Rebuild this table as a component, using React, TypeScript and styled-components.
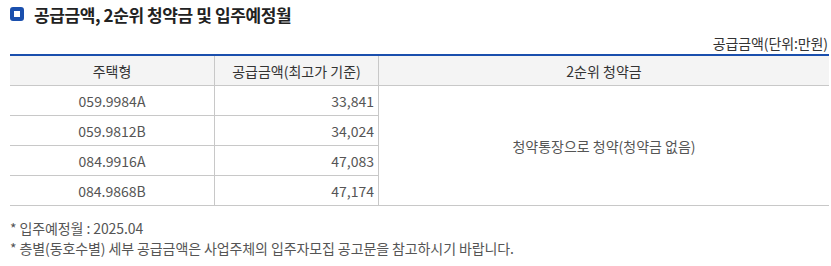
import styled, { createGlobalStyle } from 'styled-components'

const GlobalStyle = createGlobalStyle`
  body {
    margin: 0;
    background: #fff;
    font-family: "Noto Sans CJK KR", "Noto Sans", sans-serif;
  }
`

const Wrapper = styled.div`
  width: 819px;
  padding: 0 0 0 10px;
`

const TitleRow = styled.div`
  display: flex;
  align-items: center;
  gap: 10px;
  height: 28px;
`

const TitleIcon = styled.span`
  width: 14px;
  height: 14px;
  box-sizing: border-box;
  border: 4px solid #1a4fad;
  border-radius: 3px;
  background: #fff;
`

const Title = styled.h3`
  margin: 0;
  font-size: 17px;
  font-weight: 700;
  color: #222;
  letter-spacing: -0.4px;
`

const Unit = styled.div`
  margin-top: 5px;
  text-align: right;
  font-size: 14px;
  color: #333;
  letter-spacing: -0.1px;
  line-height: 21px;
  padding-right: 1px;
`

const Table = styled.table`
  width: 100%;
  border-collapse: separate;
  border-spacing: 0;
  border-top: 2px solid #1a4fad;
  font-size: 14px;
`

const Th = styled.th<{ $w?: number }>`
  box-sizing: border-box;
  width: ${(p) => (p.$w ? `${p.$w}px` : 'auto')};
  height: 30px;
  padding: 0;
  background: #f4f4f4;
  font-weight: 400;
  color: #333;
  border-bottom: 1px solid #c8c8c8;
  & + & {
    border-left: 1px solid #c8c8c8;
  }
`

const Td = styled.td<{ $align?: 'center' | 'right' }>`
  box-sizing: border-box;
  height: 30px;
  padding: 0 4px;
  color: #555;
  text-align: ${(p) => p.$align ?? 'center'};
  border-bottom: 1px solid #c8c8c8;
  & + & {
    border-left: 1px solid #c8c8c8;
  }
`

const Notes = styled.ul`
  list-style: none;
  margin: 12px 0 0;
  padding: 0;
  font-size: 14px;
  color: #555;
  letter-spacing: -0.1px;
  line-height: 20px;
`

const rows = [
  { type: '059.9984A', price: '33,841' },
  { type: '059.9812B', price: '34,024' },
  { type: '084.9916A', price: '47,083' },
  { type: '084.9868B', price: '47,174' },
]

export default function App() {
  return (
    <Wrapper>
      <GlobalStyle />
      <TitleRow>
        <TitleIcon />
        <Title>공급금액, 2순위 청약금 및 입주예정월</Title>
      </TitleRow>
      <Unit>공급금액(단위:만원)</Unit>
      <Table>
        <thead>
          <tr>
            <Th $w={204}>주택형</Th>
            <Th $w={164}>공급금액(최고가 기준)</Th>
            <Th>2순위 청약금</Th>
          </tr>
        </thead>
        <tbody>
          {rows.map((r, i) => (
            <tr key={r.type}>
              <Td>{r.type}</Td>
              <Td $align="right">{r.price}</Td>
              {i === 0 && <Td rowSpan={rows.length}>청약통장으로 청약(청약금 없음)</Td>}
            </tr>
          ))}
        </tbody>
      </Table>
      <Notes>
        <li>* 입주예정월 : 2025.04</li>
        <li>* 층별(동호수별) 세부 공급금액은 사업주체의 입주자모집 공고문을 참고하시기 바랍니다.</li>
      </Notes>
    </Wrapper>
  )
}
